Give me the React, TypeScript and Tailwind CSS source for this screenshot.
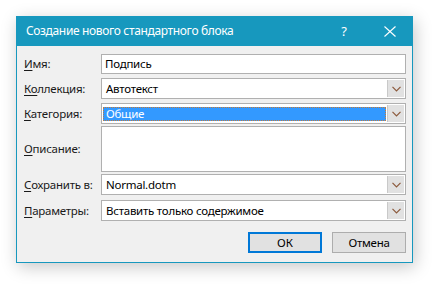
import React from "react";

const Chevron = () => (
  <svg width="9" height="6" viewBox="0 0 9 6" fill="none">
    <polyline points="0.5,0.8 4.5,4.8 8.5,0.8" stroke="#8c5a3c" strokeWidth="1.2" />
  </svg>
);

const DropButton = () => (
  <div className="w-[17px] h-full bg-[#e1e1e1] border-l border-[#c9c9c9] flex items-center justify-center">
    <Chevron />
  </div>
);

function Label({ u, rest }: { u: string; rest: string }) {
  return (
    <div className="w-[77px] shrink-0 text-[11.5px] tracking-[-0.25px] text-[#1a1a1a]">
      <span className="underline underline-offset-2">{u}</span>
      {rest}
    </div>
  );
}

function Combo({ value, selected }: { value: string; selected?: boolean }) {
  return (
    <div className="flex-1 h-full flex border border-[#b0b0b0] bg-white p-[1px]">
      <div className="flex-1 flex items-center">
        {selected ? (
          <div className="flex-1 h-[14px] mr-[1px] bg-[#3399ff] border border-dotted border-[#c27a3a] flex items-center pl-[2px] text-white text-[11.5px] tracking-[-0.25px]">
            {value}
          </div>
        ) : (
          <span className="pl-[3px] text-[11.5px] tracking-[-0.25px] text-black">{value}</span>
        )}
      </div>
      <DropButton />
    </div>
  );
}

export default function App() {
  return (
    <div className="w-[434px] h-[285px] bg-white pt-[16px] pl-[16px] font-['Noto_Sans','Open_Sans',sans-serif] leading-none">
      <div className="w-[397px] h-[247px] flex flex-col shadow-[2px_4px_16px_rgba(0,0,0,0.22)]">
        <div className="h-[30px] shrink-0 bg-[#1798be] flex items-center text-white">
          <span className="flex-1 pl-[10px] text-[12px] tracking-[-0.35px]">Создание нового стандартного блока</span>
          <div className="w-[46px] h-full flex items-center justify-center text-[13px]">?</div>
          <div className="w-[46px] h-full flex items-center justify-center">
            <svg width="12" height="11" viewBox="0 0 12 11">
              <line x1="0.5" y1="0.5" x2="11.5" y2="10.5" stroke="white" strokeWidth="1.1" />
              <line x1="11.5" y1="0.5" x2="0.5" y2="10.5" stroke="white" strokeWidth="1.1" />
            </svg>
          </div>
        </div>
        <div className="flex-1 bg-[#f0f0f0] border border-t-0 border-[#1798be] pl-[7px] pr-[6px] pt-[8px] flex flex-col">
          <div className="flex items-center h-[20px]">
            <Label u="И" rest="мя:" />
            <div className="flex-1 h-full flex items-center border border-[#b0b0b0] bg-white">
              <span className="pl-[3px] text-[11.5px] tracking-[-0.25px] text-black">Подпись</span>
            </div>
          </div>
          <div className="flex items-center h-[21px] mt-[4px]">
            <Label u="Ко" rest="ллекция:" />
            <Combo value="Автотекст" />
          </div>
          <div className="flex items-center h-[21px] mt-[4px]">
            <Label u="К" rest="атегория:" />
            <Combo value="Общие" selected />
          </div>
          <div className="flex items-center h-[46px] mt-[2px]">
            <Label u="О" rest="писание:" />
            <div className="flex-1 h-full border border-[#b0b0b0] bg-white" />
          </div>
          <div className="flex items-center h-[21px] mt-[2px]">
            <Label u="С" rest="охранить в:" />
            <Combo value="Normal.dotm" />
          </div>
          <div className="flex items-center h-[21px] mt-[5px]">
            <Label u="П" rest="араметры:" />
            <Combo value="Вставить только содержимое" />
          </div>
          <div className="flex justify-end gap-[10px] mt-[11px]">
            <button className="w-[74px] h-[21px] bg-[#e1e1e1] border-2 border-[#0078d7] text-[11.5px] text-black flex items-center justify-center">
              ОК
            </button>
            <button className="w-[74px] h-[21px] bg-[#e1e1e1] border border-[#adadad] text-[11.5px] tracking-[-0.25px] text-black flex items-center justify-center">
              Отмена
            </button>
          </div>
        </div>
      </div>
    </div>
  );
}
